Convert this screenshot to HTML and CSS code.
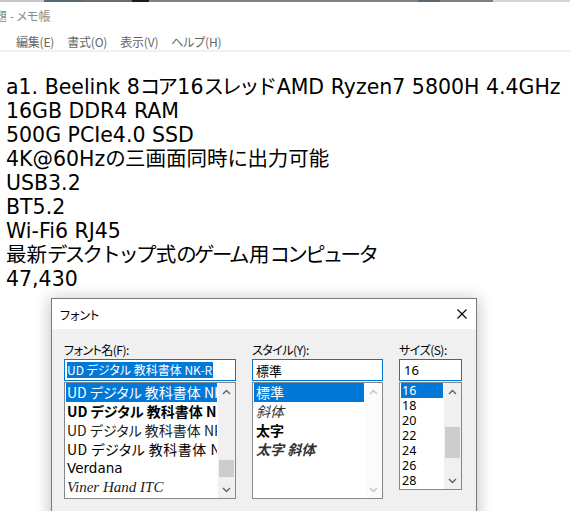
FILE: index.html
```html
<!DOCTYPE html>
<html lang="ja">
<head>
<meta charset="utf-8">
<title>無題 - メモ帳</title>
<link rel="stylesheet" href="styles.css">
</head>
<body>
<div class="stripe"></div>
<header class="titlebar"><span class="title">無題 - メモ帳</span></header>
<nav class="menubar">
  <span>編集(E)</span>
  <span>書式(O)</span>
  <span>表示(V)</span>
  <span>ヘルプ(H)</span>
</nav>
<main class="editor">
  <div>a1. Beelink 8<span class="kana">コア</span>16<span class="kana">スレッド</span>AMD Ryzen7 5800H 4.4GHz</div>
  <div>16GB DDR4 RAM</div>
  <div>500G PCIe4.0 SSD</div>
  <div>4K@60Hz<span class="kana">の</span>三画面同時<span class="kana">に</span>出力可能</div>
  <div>USB3.2</div>
  <div>BT5.2</div>
  <div>Wi-Fi6 RJ45</div>
  <div>最新<span class="kana">デスクトップ</span>式<span class="kana">のゲーム</span>用<span class="kana">コンピュータ</span></div>
  <div>47,430</div>
</main>

<section class="dialog">
  <header class="dlg-title">
    <span>フォント</span>
    <svg class="close" width="10" height="10" viewBox="0 0 10 10"><path d="M0.5 0.5 L9.5 9.5 M9.5 0.5 L0.5 9.5" stroke="#000" stroke-width="1.1" fill="none"/></svg>
  </header>
  <div class="dlg-body">
    <div class="field f-name">
      <label>フォント名(F):</label>
      <div class="input"><span class="sel">UD デジタル 教科書体 NK-R</span></div>
      <div class="listbox">
        <ul class="items">
          <li class="selected">UD デジタル 教科書体 NK-R</li>
          <li class="bold">UD デジタル 教科書体 NK-B</li>
          <li class="light">UD デジタル 教科書体 NP-R</li>
          <li class="wide">UD デジタル 教科書体 NP-B</li>
          <li class="verdana">Verdana</li>
          <li class="viner">Viner Hand ITC</li>
        </ul>
        <div class="scrollbar">
          <div class="arrow"><svg width="9" height="6" viewBox="0 0 9 6"><path d="M1 5 L4.5 1.5 L8 5" stroke="#606060" stroke-width="1.4" fill="none"/></svg></div>
          <div class="track"><div class="thumb thumb-name"></div></div>
          <div class="arrow"><svg width="9" height="6" viewBox="0 0 9 6"><path d="M1 1 L4.5 4.5 L8 1" stroke="#606060" stroke-width="1.4" fill="none"/></svg></div>
        </div>
      </div>
    </div>
    <div class="field f-style">
      <label>スタイル(Y):</label>
      <div class="input">標準</div>
      <div class="listbox">
        <ul class="items">
          <li class="selected">標準</li>
          <li class="italic">斜体</li>
          <li class="bold">太字</li>
          <li class="bold italic">太字 斜体</li>
        </ul>
        <div class="scrollbar disabled">
          <div class="arrow"><svg width="9" height="6" viewBox="0 0 9 6"><path d="M1 5 L4.5 1.5 L8 5" stroke="#c4c4c4" stroke-width="1.4" fill="none"/></svg></div>
          <div class="track"></div>
          <div class="arrow"><svg width="9" height="6" viewBox="0 0 9 6"><path d="M1 1 L4.5 4.5 L8 1" stroke="#c4c4c4" stroke-width="1.4" fill="none"/></svg></div>
        </div>
      </div>
    </div>
    <div class="field f-size">
      <label>サイズ(S):</label>
      <div class="input">16</div>
      <div class="listbox">
        <ul class="items">
          <li class="selected">16</li>
          <li>18</li>
          <li>20</li>
          <li>22</li>
          <li>24</li>
          <li>26</li>
          <li>28</li>
        </ul>
        <div class="scrollbar">
          <div class="arrow"><svg width="9" height="6" viewBox="0 0 9 6"><path d="M1 5 L4.5 1.5 L8 5" stroke="#606060" stroke-width="1.4" fill="none"/></svg></div>
          <div class="track"><div class="thumb thumb-size"></div></div>
          <div class="arrow"><svg width="9" height="6" viewBox="0 0 9 6"><path d="M1 1 L4.5 4.5 L8 1" stroke="#606060" stroke-width="1.4" fill="none"/></svg></div>
        </div>
      </div>
    </div>
  </div>
</section>
</body>
</html>
```

FILE: styles.css
```css
html, body {
  margin: 0;
  padding: 0;
}
body {
  width: 570px;
  height: 511px;
  overflow: hidden;
  position: relative;
  background: #fff;
  font-family: "Noto Sans CJK JP", "Noto Sans", sans-serif;
  color: #000;
}

.stripe {
  height: 2px;
  background: linear-gradient(to right,
    #c8c8c8 0 44px, #5b6a72 44px 83px, #6c6c6c 83px 132px,
    #1c1c1c 132px 149px, #838383 149px 418px, #5b6a72 418px 440px,
    #7e7e7e 440px 493px, #d6d6d6 493px);
}

.titlebar {
  height: 28px;
  line-height: 28px;
  font-size: 12px;
  color: #8a8a8a;
  white-space: nowrap;
  overflow: hidden;
}
.title {
  display: inline-block;
  margin-left: -17px;
  font-feature-settings: "palt" 1;
}

.menubar {
  height: 17px;
  padding: 3px 0 0 16px;
  display: flex;
  gap: 13px;
  font-size: 12px;
  line-height: 17px;
  color: #666;
  border-bottom: 2px solid #f0f0f0;
  font-feature-settings: "palt" 1;
  letter-spacing: -0.2px;
}

.editor {
  padding: 23px 0 0 6px;
  font-family: "DejaVu Sans", "Noto Sans CJK JP", sans-serif;
  font-size: 20.5px;
  line-height: 24px;
  color: #000;
  white-space: nowrap;
}
.kana {
  letter-spacing: -2.7px;
  margin-right: 2px;
}

/* Font dialog window (floats over the editor) */
.dialog {
  position: absolute;
  left: 51px;
  top: 298px;
  width: 426px;
  height: 240px;
  box-sizing: border-box;
  border: 1px solid #7a7a7a;
  background: #f0f0f0;
  box-shadow: 0 2px 14px 2px rgba(0, 0, 0, 0.22);
  font-size: 12px;
  font-feature-settings: "palt" 1;
}
.dlg-title {
  height: 30px;
  background: #fff;
  display: flex;
  align-items: center;
  justify-content: space-between;
  padding: 0 9px 0 8px;
}
.dlg-title span {
  font-size: 12px;
}
.close {
  display: block;
}

.dlg-body {
  display: flex;
  gap: 16px;
  padding: 13px 0 0 12px;
}
.f-name { width: 172px; }
.f-style { width: 131px; }
.f-size { width: 63px; }

.field label {
  display: block;
  height: 16px;
  line-height: 16px;
  font-size: 12px;
  letter-spacing: -0.5px;
  margin-bottom: 1px;
  white-space: nowrap;
}

.input {
  height: 22px;
  box-sizing: border-box;
  border: 1px solid #0078d7;
  background: #fff;
  display: flex;
  align-items: center;
  padding-left: 3px;
  font-size: 13px;
  white-space: nowrap;
  overflow: hidden;
}
.f-name .input { padding-left: 2px; font-size: 12px; }
.f-size .input { padding-left: 4px; font-family: "Noto Sans", sans-serif; }
.sel {
  background: #0078d7;
  color: #fff;
  height: 16px;
  line-height: 16px;
  padding-right: 1px;
}

.listbox {
  margin-top: 1px;
  border: 1px solid #828790;
  background: #fff;
  display: flex;
  box-sizing: border-box;
}
.f-name .listbox, .f-style .listbox { height: 117px; }
.f-size .listbox { height: 108px; }

.items {
  flex: 1;
  min-width: 0;
  list-style: none;
  margin: 0;
  padding: 0 1px;
  overflow: hidden;
}
.items li {
  white-space: nowrap;
  overflow: hidden;
  height: 19px;
  line-height: 19px;
  font-size: 14px;
  padding-left: 1px;
}
.f-style .items li { padding-left: 2px; }
.f-size .items li {
  height: 15px;
  line-height: 15px;
  font-size: 12.5px;
  font-family: "Noto Sans", sans-serif;
}
.items li.selected {
  background: #0078d7;
  color: #fff;
}
.items li.bold { font-weight: 700; }
.items li.italic { font-style: italic; color: #333; }
.items li.light { color: #222; }
.items li.wide { letter-spacing: 0.5px; }
.items li.verdana {
  font-family: "DejaVu Sans", sans-serif;
  font-size: 13.5px;
}
.items li.viner {
  font-family: "Liberation Serif", serif;
  font-style: italic;
  font-size: 15px;
  color: #1a1a2a;
}

.scrollbar {
  width: 17px;
  flex: none;
  display: flex;
  flex-direction: column;
  background: #f0f0f0;
}
.scrollbar.disabled { background: #fbfbfb; }
.arrow {
  height: 17px;
  flex: none;
  display: flex;
  align-items: center;
  justify-content: center;
}
.arrow svg { display: block; }
.track { flex: 1; }
.thumb {
  background: #cdcdcd;
  margin: 0 1px;
}
.thumb-name { margin-top: 60px; height: 17px; }
.thumb-size { margin-top: 27px; height: 31px; }
```
